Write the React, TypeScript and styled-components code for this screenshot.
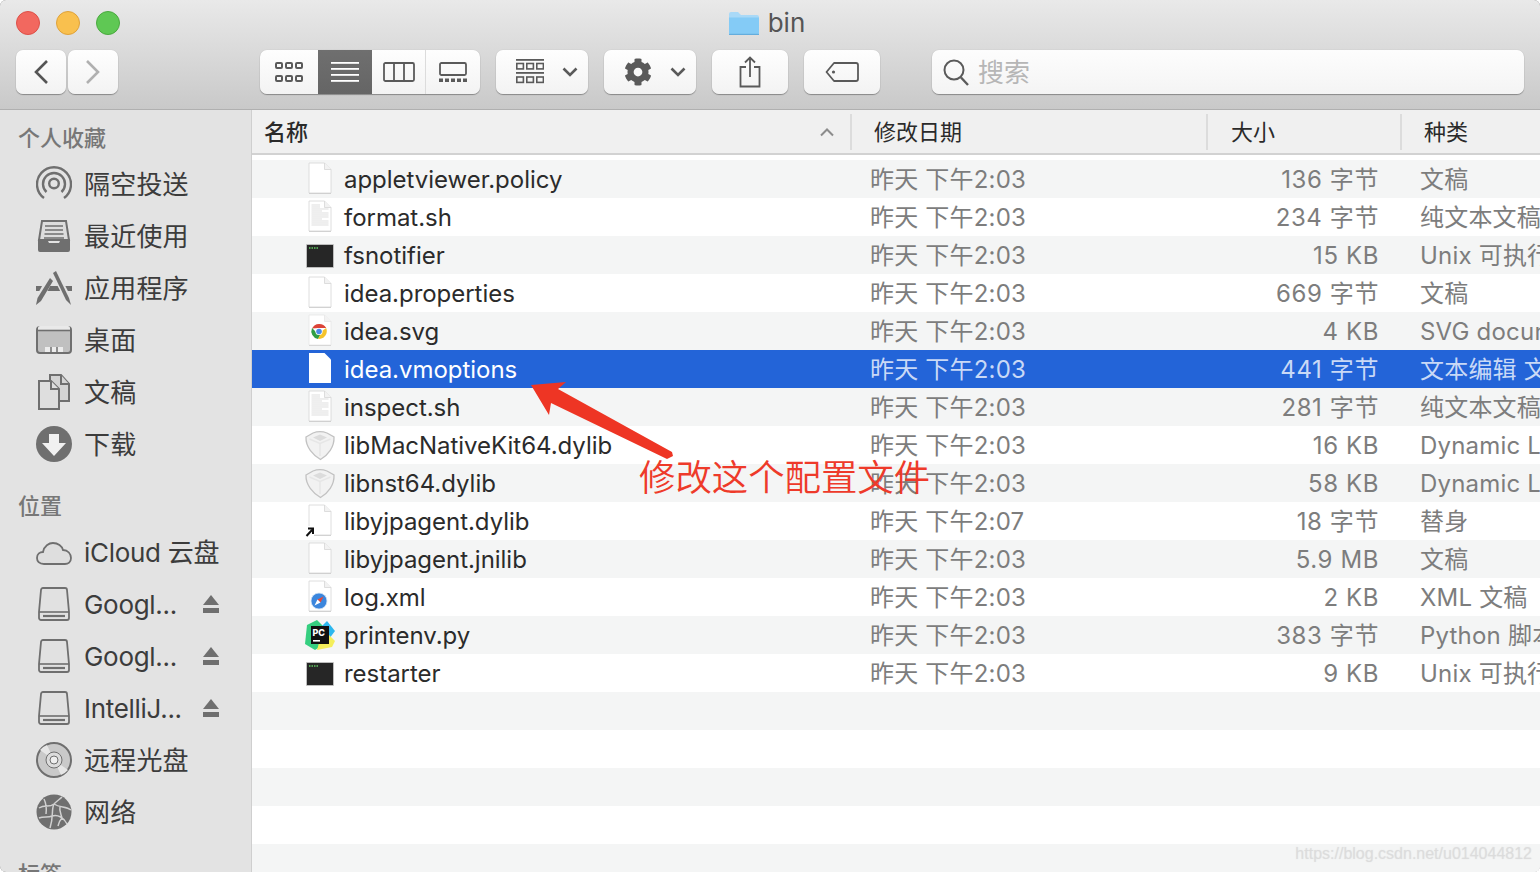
import styled, { createGlobalStyle } from "styled-components";
import { FaCog } from "react-icons/fa";

const GlobalStyle = createGlobalStyle`
  html, body {
    margin: 0;
    padding: 0;
    background: #fff;
    overflow: hidden;
  }
  * { box-sizing: border-box; }
`;

const FONT = `Inter, "Noto Sans CJK SC", sans-serif`;

const Window = styled.div`
  position: relative;
  width: 1540px;
  height: 872px;
  overflow: hidden;
  display: flex;
  flex-direction: column;
  font-family: ${FONT};
  background: #777;
  border-radius: 6px;
`;

const Toolbar = styled.header`
  height: 110px;
  flex: none;
  display: flex;
  flex-direction: column;
  background: linear-gradient(#e9e9e9, #c9c9c9);
  border-bottom: 1px solid #b0b0b0;
`;

const TitleRow = styled.div`
  height: 50px;
  flex: none;
  display: grid;
  grid-template-columns: 1fr auto 1fr;
  align-items: center;
  padding: 0 22px 5px 16px;
`;

const Lights = styled.div`
  display: flex;
  gap: 16px;
`;

const Light = styled.span<{ $color: string; $edge: string }>`
  width: 24px;
  height: 24px;
  border-radius: 50%;
  background: ${(p) => p.$color};
  border: 1px solid ${(p) => p.$edge};
`;

const Title = styled.div`
  display: flex;
  align-items: center;
  gap: 9px;
  font-size: 26px;
  line-height: 32px;
  color: #555;
`;

const ControlRow = styled.div`
  display: flex;
  align-items: center;
  height: 44px;
  padding-left: 16px;
`;

const Button = styled.div<{ $width: number; $gap?: number }>`
  width: ${(p) => p.$width}px;
  height: 44px;
  margin-left: ${(p) => p.$gap ?? 16}px;
  flex: none;
  display: flex;
  align-items: center;
  justify-content: center;
  background: linear-gradient(#fefefe, #f3f3f3);
  border-radius: 7px;
  box-shadow: 0 1px 1px rgba(0, 0, 0, 0.32), 0 0 1px rgba(0, 0, 0, 0.2);
  &:first-child { margin-left: 0; }
`;

const MenuButton = styled(Button)`
  justify-content: flex-start;
  gap: 18px;
  padding-left: 20px;
`;

const ViewGroup = styled.div`
  display: flex;
  height: 44px;
  margin-left: 142px;
  flex: none;
  border-radius: 7px;
  overflow: hidden;
  background: linear-gradient(#fefefe, #f3f3f3);
  box-shadow: 0 1px 1px rgba(0, 0, 0, 0.32), 0 0 1px rgba(0, 0, 0, 0.2);
`;

const ViewSegment = styled.div<{ $width: number; $active?: boolean; $divider?: boolean }>`
  width: ${(p) => p.$width}px;
  display: flex;
  align-items: center;
  justify-content: center;
  background: ${(p) => (p.$active ? "linear-gradient(#6f6f6f, #656565)" : "transparent")};
  border-left: ${(p) => (p.$divider ? "1px solid #dcdcdc" : "none")};
`;

const SearchBox = styled.div`
  width: 592px;
  height: 44px;
  margin-left: 52px;
  flex: none;
  display: flex;
  align-items: center;
  gap: 9px;
  padding-left: 11px;
  font-size: 26px;
  color: #b6b6b6;
  background: linear-gradient(#fdfdfd, #f4f4f4);
  border-radius: 7px;
  box-shadow: 0 1px 1px rgba(0, 0, 0, 0.32), 0 0 1px rgba(0, 0, 0, 0.2);
`;

// fixed line box, nudged down: keeps CJK fallback glyphs on the row's optical centre
const Label = styled.span<{ $line: number }>`
  display: block;
  line-height: ${(p) => p.$line - 2}px;
  padding-top: 2px;
`;

const Body = styled.div`
  flex: 1;
  min-height: 0;
  display: flex;
`;

const Sidebar = styled.nav`
  width: 252px;
  flex: none;
  overflow: hidden;
  background: #e3e3e3;
  border-right: 1px solid #cfcfcf;
  padding-top: 14px;
`;

const SectionTitle = styled.div`
  height: 28px;
  line-height: 28px;
  margin: 22px 0 6px 18px;
  font-size: 22px;
  font-weight: 500;
  color: #777;
  &:first-child { margin-top: 0; }
`;

const SideItem = styled.div<{ $latin?: boolean }>`
  height: 52px;
  display: flex;
  align-items: center;
  gap: 12px;
  padding-left: 36px;
  padding-right: 32px;
  font-size: 26px;
  letter-spacing: ${(p) => (p.$latin ? "-0.3px" : "0.2px")};
  color: #3c3c3c;
  white-space: nowrap;
`;

const Eject = styled.svg`
  margin-left: auto;
  flex: none;
`;

const Main = styled.main`
  flex: 1;
  min-width: 0;
  display: flex;
  flex-direction: column;
  background: #fff;
`;

const HeaderRow = styled.div`
  height: 45px;
  flex: none;
  display: grid;
  grid-template-columns: 599px 356px 194px 139px;
  background: #f0f0f0;
  border-bottom: 2px solid #d2d2d2;
`;

const HeaderCell = styled.div<{ $pad: number; $sorted?: boolean }>`
  position: relative;
  display: flex;
  align-items: center;
  justify-content: space-between;
  padding-left: ${(p) => p.$pad}px;
  padding-right: 16px;
  font-size: 22px;
  font-weight: ${(p) => (p.$sorted ? 500 : 400)};
  color: #2a2a2a;
  &:not(:first-child)::before {
    content: "";
    position: absolute;
    left: -1px;
    top: 4px;
    bottom: 3px;
    width: 2px;
    background: #dcdcdc;
  }
`;

const List = styled.div`
  flex: 1;
  min-height: 0;
  padding-top: 5px;
  overflow: hidden;
`;

const Row = styled.div<{ $selected?: boolean }>`
  height: 38px;
  display: grid;
  grid-template-columns: 618px 240px 269px 161px;
  align-items: center;
  font-size: 24px;
  white-space: nowrap;
  background: ${(p) => (p.$selected ? "#2364d8" : "#fff")};
  &:nth-child(odd) {
    background: ${(p) => (p.$selected ? "#2364d8" : "#f4f5f5")};
  }
`;

const NameCell = styled.div<{ $selected?: boolean }>`
  display: flex;
  align-items: center;
  gap: 7px;
  padding-left: 49px;
  letter-spacing: -0.03px;
  color: ${(p) => (p.$selected ? "#fff" : "#2b2b2b")};
`;

const DateCell = styled.div<{ $selected?: boolean }>`
  line-height: 36px;
  padding-top: 2px;
  letter-spacing: 0.2px;
  color: ${(p) => (p.$selected ? "#c9d9f6" : "#7d7d7d")};
`;

const SizeCell = styled(DateCell)`
  text-align: right;
  letter-spacing: 0.6px;
`;

const KindCell = styled(DateCell)`
  padding-left: 41px;
  overflow: hidden;
`;

const AnnotationArrow = styled.svg`
  position: absolute;
  left: 0;
  top: 0;
  pointer-events: none;
`;

const AnnotationText = styled.div`
  position: absolute;
  left: 639px;
  top: 451px;
  font-size: 36.4px;
  line-height: 54px;
  font-weight: 350;
  color: #ee3a2a;
  white-space: nowrap;
`;

const Watermark = styled.div`
  position: absolute;
  right: 8px;
  bottom: 8px;
  font-family: "Liberation Sans", sans-serif;
  font-size: 16px;
  line-height: 20px;
  color: rgba(218, 218, 218, 0.7);
  text-shadow: 0 0 1px rgba(190, 190, 190, 0.4);
`;

const GRAY = "#5a5a5a";

function Chevron({ dir, color }: { dir: "left" | "right"; color: string }) {
  return (
    <svg width="16" height="26" viewBox="0 0 16 26" fill="none">
      <path
        d={dir === "left" ? "M14 2 L3 13 L14 24" : "M2 2 L13 13 L2 24"}
        stroke={color}
        strokeWidth="2.6"
      />
    </svg>
  );
}

function Down() {
  return (
    <svg width="16" height="10" viewBox="0 0 16 10" fill="none">
      <path d="M1.5 1.5 L8 8 L14.5 1.5" stroke={GRAY} strokeWidth="2.6" />
    </svg>
  );
}

function GridIcon() {
  const cells = [0, 10, 20].flatMap((x) => [0, 13].map((y) => [x, y]));
  return (
    <svg width="28" height="20" viewBox="0 0 28 20" fill="none">
      {cells.map(([x, y]) => (
        <rect key={`${x}-${y}`} x={x + 1} y={y + 1} width="6" height="5" rx="1" stroke={GRAY} strokeWidth="2" />
      ))}
    </svg>
  );
}

function ListIcon() {
  return (
    <svg width="28" height="20" viewBox="0 0 28 20" fill="#fff">
      {[0, 6, 12, 18].map((y) => (
        <rect key={y} x="0" y={y} width="28" height="1.8" />
      ))}
    </svg>
  );
}

function ColumnsIcon() {
  return (
    <svg width="32" height="20" viewBox="0 0 32 20" fill="none" stroke={GRAY} strokeWidth="1.8">
      <rect x="1" y="1" width="30" height="18" rx="1.5" />
      <path d="M11 1 V19 M21 1 V19" />
    </svg>
  );
}

function GalleryIcon() {
  return (
    <svg width="28" height="20" viewBox="0 0 28 20" fill="none">
      <rect x="1" y="1" width="26" height="12" rx="1.5" stroke={GRAY} strokeWidth="1.8" />
      {[0, 6, 12, 18, 24].map((x) => (
        <rect key={x} x={x} y="16.5" width="4" height="3.5" fill={GRAY} />
      ))}
    </svg>
  );
}

function ArrangeIcon() {
  const row = (y: number) =>
    [0, 10, 20].map((x) => (
      <rect key={`${x}-${y}`} x={x + 0.8} y={y} width="6.6" height="5.4" fill="none" stroke={GRAY} strokeWidth="1.6" />
    ));
  return (
    <svg width="28" height="26" viewBox="0 0 28 26">
      <rect x="0" y="0" width="28" height="1.8" fill={GRAY} />
      {row(4.5)}
      <rect x="0" y="13" width="28" height="1.8" fill={GRAY} />
      {row(18)}
    </svg>
  );
}

function ShareIcon() {
  return (
    <svg width="22" height="32" viewBox="0 0 22 32" fill="none" stroke={GRAY} strokeWidth="1.8">
      <path d="M7 11 H1.5 V30.5 H20.5 V11 H15" />
      <path d="M11 21 V1.5 M6 6.5 L11 1.5 L16 6.5" />
    </svg>
  );
}

function TagIcon() {
  return (
    <svg width="34" height="20" viewBox="0 0 34 20" fill="none">
      <path
        d="M9 1 H31 a2 2 0 0 1 2 2 V17 a2 2 0 0 1 -2 2 H9 L1.5 10 Z"
        stroke={GRAY}
        strokeWidth="1.8"
        strokeLinejoin="round"
      />
      <circle cx="8.5" cy="10" r="1.6" fill={GRAY} />
    </svg>
  );
}

function SearchIcon() {
  return (
    <svg width="26" height="28" viewBox="0 0 26 28" fill="none" stroke={GRAY} strokeWidth="2">
      <circle cx="11" cy="12" r="9.5" />
      <path d="M18 19.5 L25 27" strokeWidth="2.4" />
    </svg>
  );
}

function FolderIcon() {
  return (
    <svg width="30" height="24" viewBox="0 0 30 24">
      <path d="M0 3 a2 2 0 0 1 2 -2 H9 l3 3 H28 a2 2 0 0 1 2 2 V8 H0 Z" fill="#a9d9f7" />
      <path d="M0 6.5 H30 V22 a2 2 0 0 1 -2 2 H2 a2 2 0 0 1 -2 -2 Z" fill="#84cbf6" />
      <rect x="0" y="22.8" width="30" height="1.2" fill="#64addd" />
    </svg>
  );
}

const SIDE = "#6f6f6f";

const sideIcons: Record<string, React.ReactNode> = {
  airdrop: (
    <g fill="none" stroke={SIDE} strokeWidth="2.4">
      <path d="M8 32 A17 17 0 1 1 28 32" />
      <path d="M10.5 26 A11 11 0 1 1 25.5 26" />
      <circle cx="18" cy="17.5" r="4.8" />
    </g>
  ),
  recents: (
    <g>
      <path d="M6 3 H30 L33 22 H3 Z" fill="#dcdcdc" stroke={SIDE} strokeWidth="2" />
      <path d="M9 8 H27 M9 12 H27 M8.5 16 H27.5 M8 20 H28" stroke={SIDE} strokeWidth="1.6" />
      <path d="M2 21 H11 L13 25 H23 L25 21 H34 V32 a2 2 0 0 1 -2 2 H4 a2 2 0 0 1 -2 -2 Z" fill={SIDE} />
    </g>
  ),
  apps: (
    <g>
      <path d="M0 16 H36 V21 H0 Z" fill={SIDE} />
      <path d="M18.5 2 L33 31" stroke="#e3e3e3" strokeWidth="7" />
      <path d="M16 5 L2 31" stroke="#e3e3e3" strokeWidth="7" />
      <path d="M17 3 L20 1 L33 28 L35 35 L30 30 Z" fill={SIDE} />
      <path d="M14 8 L17 11 L5 31 L0 35 L1.5 28 Z" fill={SIDE} />
    </g>
  ),
  desktop: (
    <g>
      <rect x="1" y="5" width="34" height="26" rx="3" fill="#c0c0c0" stroke={SIDE} strokeWidth="2" />
      <path d="M2 6 a2 2 0 0 1 2 -2 H32 a2 2 0 0 1 2 2 V9 H2 Z" fill="#e9e9e9" />
      <path d="M2 8.5 H34" stroke={SIDE} strokeWidth="1.6" />
      <rect x="9" y="25" width="18" height="5" fill="#ececec" />
      <path d="M15 25 V30 M21 25 V30" stroke={SIDE} strokeWidth="1.5" />
    </g>
  ),
  documents: (
    <g stroke={SIDE} strokeWidth="2" fill="#d4d4d4">
      <path d="M14 1 H25 L33 10 V27 H14 Z" />
      <path d="M25 1 V10 H33" />
      <path d="M3 7 H15 L23 15 V35 H3 Z" fill="#dedede" />
      <path d="M15 7 V15 H23" fill="#dedede" />
    </g>
  ),
  download: (
    <g>
      <circle cx="18" cy="18" r="18" fill={SIDE} />
      <path d="M13 8 H23 V17 H30 L18 30 L6 17 H13 Z" fill="#f1f1f1" />
    </g>
  ),
  cloud: (
    <path
      d="M8 30 C3 30 1 27 1 24 C1 20 4 18 7 18 C8 12 13 9 17 9 C22 9 26 12 27 16 C32 16 35 20 35 24 C35 28 32 30 29 30 Z"
      fill="#dedede"
      stroke={SIDE}
      strokeWidth="1.8"
    />
  ),
  disk: (
    <g stroke={SIDE} fill="none">
      <path d="M7 2 H29 a2 2 0 0 1 2 2 L33 26 V32 a2 2 0 0 1 -2 2 H5 a2 2 0 0 1 -2 -2 V26 L5 4 a2 2 0 0 1 2 -2 Z" fill="#e1e1e1" strokeWidth="1.8" />
      <path d="M3 26 H33" strokeWidth="1.6" />
      <path d="M7 30 H29" strokeWidth="2.2" />
    </g>
  ),
  cd: (
    <g>
      <circle cx="18" cy="18" r="17" fill="#c9c9c9" stroke={SIDE} strokeWidth="2" />
      <path d="M18 18 L4 8 A17 17 0 0 1 11 3 Z M18 18 L32 28 A17 17 0 0 1 25 33 Z" fill="#e6e6e6" />
      <circle cx="18" cy="18" r="8" fill="#dcdcdc" stroke={SIDE} strokeWidth="1" />
      <circle cx="18" cy="18" r="4" fill="#eeeeee" stroke={SIDE} strokeWidth="1" />
    </g>
  ),
  network: (
    <g>
      <circle cx="18" cy="18" r="17.5" fill={SIDE} />
      <path
        d="M3 14 C9 10 13 14 18 10 C21 7 24 5 26 3 M18 10 C15 16 18 22 14 34 M18 10 C24 14 30 12 35 16 M16 22 C22 20 28 24 31 30 M3 24 C8 22 12 24 16 22 M24 12 C23 17 25 20 26 24 M8 5 C10 9 11 12 10 20 M22 32 C23 28 24 26 26 24"
        fill="none"
        stroke="#d0d0d0"
        strokeWidth="1.5"
      />
    </g>
  ),
};

function SideIcon({ name }: { name: string }) {
  return (
    <svg width="36" height="36" viewBox="0 0 36 36" style={{ flex: "none" }}>
      {sideIcons[name]}
    </svg>
  );
}

const PAGE = "M8 2 H23.5 L30 8.5 V32 H8 Z";

function Page({ stroke = "#d6d6d6" }: { stroke?: string }) {
  return (
    <>
      <path d="M8 3 H24 L30 9 V33 H8 Z" fill="#bdbdbd" opacity="0.7" />
      <path d={PAGE} fill="#fff" stroke={stroke} strokeWidth="0.8" />
      <path d="M23.5 2 V8.5 H30" fill="#f2f2f2" stroke={stroke} strokeWidth="0.8" />
    </>
  );
}

function FileIcon({ kind, selected }: { kind: string; selected?: boolean }) {
  let art: React.ReactNode;
  if (kind === "text") {
    const lines = [6, 8, 10, 12, 14, 16, 18, 20, 22, 24, 26];
    art = (
      <>
        <Page />
        {lines.map((y, i) => (
          <path key={y} d={`M10.5 ${y} H${i < 2 ? 19 : i % 4 === 3 ? 21 : 27.5}`} stroke="#d0d0d0" strokeWidth="0.7" />
        ))}
      </>
    );
  } else if (kind === "terminal") {
    art = (
      <>
        <rect x="5" y="7" width="28" height="24" rx="1" fill="#bdbdbd" />
        <rect x="6" y="8" width="26" height="22" fill="#262626" />
        <path d="M8 11 H9.5 M10.5 11 H12 M13 11 H14.5 M15.5 11 H17" stroke="#62c862" strokeWidth="1.6" />
      </>
    );
  } else if (kind === "chrome") {
    art = (
      <>
        <Page stroke="#e6e6e6" />
        <path d="M11 15.5 A8 8 0 0 1 25.2 15 H18 Z" fill="#dc4438" />
        <path d="M11 15 A8 8 0 0 0 17 26 L21 19 H15 Z" fill="#2f9e44" />
        <path d="M25.2 15 A8 8 0 0 1 17 26 L21 18 Z" fill="#f5c32c" />
        <circle cx="18" cy="18.5" r="3.6" fill="#fff" />
        <circle cx="18" cy="18.5" r="2.8" fill="#4a8ae8" />
      </>
    );
  } else if (kind === "dylib") {
    art = (
      <>
        <path d="M5 10 L12 6 C16 4.5 22 4.5 26 6 L33 10 C33.5 20 27 28 19.5 32.5 C12 28 4.5 20 5 10 Z" fill="#f2f2f2" stroke="#c2c2c2" strokeWidth="1.3" />
        <path d="M12 10.5 L19 7.5 L26 10.5 L19 14 Z" fill="#dcdcdc" />
        <path d="M8.5 12 L19 16.5 L29.5 12 M19 16.5 V29" fill="none" stroke="#e6e6e6" strokeWidth="1.4" />
      </>
    );
  } else if (kind === "alias") {
    art = (
      <>
        <Page />
        <rect x="4" y="23" width="9" height="11" fill="#fff" />
        <path d="M5.5 33 L11 27 M7 25.5 H12 V31" stroke="#111" strokeWidth="2" fill="none" />
      </>
    );
  } else if (kind === "safari") {
    art = (
      <>
        <Page />
        <circle cx="18" cy="22" r="8" fill="#3b86dd" stroke="#d4e4f6" strokeWidth="0.8" />
        <path d="M22.5 17.5 L19.5 23.5 L16.5 20.5 Z" fill="#e8493a" />
        <path d="M13.5 26.5 L16.5 20.5 L19.5 23.5 Z" fill="#fff" />
      </>
    );
  } else if (kind === "pycharm") {
    art = (
      <>
        <path d="M6 8 L16 3 L22 9 V28 L14 33 L4 27 Z" fill="#35cf80" />
        <path d="M26 4 L34 14 L28 22 L20 10 Z" fill="#2cb7ee" />
        <path d="M16 33 L22 12 L34 24 L31 30 Z" fill="#f4ee5a" />
        <rect x="10" y="9" width="18" height="18" fill="#111" />
        <text x="11.5" y="18.5" fontFamily="Inter, sans-serif" fontSize="9" fontWeight="800" fill="#fff">
          PC
        </text>
        <rect x="12" y="23" width="7" height="1.6" fill="#fff" />
      </>
    );
  } else if (selected) {
    art = <path d={PAGE} fill="#fff" />;
  } else {
    art = <Page />;
  }
  return (
    <svg width="36" height="36" viewBox="0 0 36 36" style={{ flex: "none" }}>
      {art}
    </svg>
  );
}

const files = [
  { name: "appletviewer.policy", icon: "doc", date: "昨天 下午2:03", size: "136 字节", kind: "文稿" },
  { name: "format.sh", icon: "text", date: "昨天 下午2:03", size: "234 字节", kind: "纯文本文稿" },
  { name: "fsnotifier", icon: "terminal", date: "昨天 下午2:03", size: "15 KB", kind: "Unix 可执行文件" },
  { name: "idea.properties", icon: "doc", date: "昨天 下午2:03", size: "669 字节", kind: "文稿" },
  { name: "idea.svg", icon: "chrome", date: "昨天 下午2:03", size: "4 KB", kind: "SVG document" },
  { name: "idea.vmoptions", icon: "doc", date: "昨天 下午2:03", size: "441 字节", kind: "文本编辑 文稿", selected: true },
  { name: "inspect.sh", icon: "text", date: "昨天 下午2:03", size: "281 字节", kind: "纯文本文稿" },
  { name: "libMacNativeKit64.dylib", icon: "dylib", date: "昨天 下午2:03", size: "16 KB", kind: "Dynamic Library" },
  { name: "libnst64.dylib", icon: "dylib", date: "昨天 下午2:03", size: "58 KB", kind: "Dynamic Library" },
  { name: "libyjpagent.dylib", icon: "alias", date: "昨天 下午2:07", size: "18 字节", kind: "替身" },
  { name: "libyjpagent.jnilib", icon: "doc", date: "昨天 下午2:03", size: "5.9 MB", kind: "文稿" },
  { name: "log.xml", icon: "safari", date: "昨天 下午2:03", size: "2 KB", kind: "XML 文稿" },
  { name: "printenv.py", icon: "pycharm", date: "昨天 下午2:03", size: "383 字节", kind: "Python 脚本" },
  { name: "restarter", icon: "terminal", date: "昨天 下午2:03", size: "9 KB", kind: "Unix 可执行文件" },
];

const favourites = [
  { icon: "airdrop", label: "隔空投送" },
  { icon: "recents", label: "最近使用" },
  { icon: "apps", label: "应用程序" },
  { icon: "desktop", label: "桌面" },
  { icon: "documents", label: "文稿" },
  { icon: "download", label: "下载" },
];

const locations = [
  { icon: "cloud", label: "iCloud 云盘", latin: true },
  { icon: "disk", label: "Googl...", latin: true, eject: true },
  { icon: "disk", label: "Googl...", latin: true, eject: true },
  { icon: "disk", label: "IntelliJ...", latin: true, eject: true },
  { icon: "cd", label: "远程光盘" },
  { icon: "network", label: "网络" },
];

export default function App() {
  return (
    <Window>
      <GlobalStyle />
      <Toolbar>
        <TitleRow>
          <Lights>
            <Light $color="#f2685f" $edge="#dd5048" />
            <Light $color="#f9c04e" $edge="#dfa23a" />
            <Light $color="#5fc854" $edge="#4aa93f" />
          </Lights>
          <Title>
            <FolderIcon />
            bin
          </Title>
        </TitleRow>
        <ControlRow>
          <Button $width={50}>
            <Chevron dir="left" color="#555" />
          </Button>
          <Button $width={50} $gap={2}>
            <Chevron dir="right" color="#b0b0b0" />
          </Button>
          <ViewGroup>
            <ViewSegment $width={58}>
              <GridIcon />
            </ViewSegment>
            <ViewSegment $width={54} $active>
              <ListIcon />
            </ViewSegment>
            <ViewSegment $width={53}>
              <ColumnsIcon />
            </ViewSegment>
            <ViewSegment $width={55} $divider>
              <GalleryIcon />
            </ViewSegment>
          </ViewGroup>
          <MenuButton $width={92}>
            <ArrangeIcon />
            <Down />
          </MenuButton>
          <MenuButton $width={92}>
            <FaCog size={28} color={GRAY} />
            <Down />
          </MenuButton>
          <Button $width={76}>
            <ShareIcon />
          </Button>
          <Button $width={76}>
            <TagIcon />
          </Button>
          <SearchBox>
            <SearchIcon />
            <Label $line={44}>搜索</Label>
          </SearchBox>
        </ControlRow>
      </Toolbar>
      <Body>
        <Sidebar>
          <SectionTitle>个人收藏</SectionTitle>
          {favourites.map((item) => (
            <SideItem key={item.label}>
              <SideIcon name={item.icon} />
              <Label $line={52}>{item.label}</Label>
            </SideItem>
          ))}
          <SectionTitle>位置</SectionTitle>
          {locations.map((item, i) => (
            <SideItem key={i} $latin={item.latin}>
              <SideIcon name={item.icon} />
              <Label $line={52}>{item.label}</Label>
              {item.eject && (
                <Eject width="16" height="18" viewBox="0 0 16 18" fill={SIDE}>
                  <path d="M8 0 L16 10 H0 Z" />
                  <rect x="0" y="13" width="16" height="5" />
                </Eject>
              )}
            </SideItem>
          ))}
          <SectionTitle>标签</SectionTitle>
        </Sidebar>
        <Main>
          <HeaderRow>
            <HeaderCell $pad={12} $sorted>
              <Label $line={43}>名称</Label>
              <svg width="16" height="10" viewBox="0 0 16 10" fill="none">
                <path d="M2 8.5 L8 2.5 L14 8.5" stroke="#8c8c8c" strokeWidth="2" />
              </svg>
            </HeaderCell>
            <HeaderCell $pad={23}>
              <Label $line={43}>修改日期</Label>
            </HeaderCell>
            <HeaderCell $pad={24}>
              <Label $line={43}>大小</Label>
            </HeaderCell>
            <HeaderCell $pad={23}>
              <Label $line={43}>种类</Label>
            </HeaderCell>
          </HeaderRow>
          <List>
            {files.map((f) => (
              <Row key={f.name} $selected={f.selected}>
                <NameCell $selected={f.selected}>
                  <FileIcon kind={f.icon} selected={f.selected} />
                  <Label $line={38}>{f.name}</Label>
                </NameCell>
                <DateCell $selected={f.selected}>{f.date}</DateCell>
                <SizeCell $selected={f.selected}>{f.size}</SizeCell>
                <KindCell $selected={f.selected}>{f.kind}</KindCell>
              </Row>
            ))}
            {[0, 1, 2, 3, 4].map((i) => (
              <Row key={i} />
            ))}
          </List>
        </Main>
      </Body>
      <AnnotationArrow width="1540" height="872" viewBox="0 0 1540 872">
        <path
          d="M531 385 L566 382 L558 389 L672 452 L673 456 L667 459 L551 403 L549 415 Z"
          fill="#ee3524"
        />
      </AnnotationArrow>
      <AnnotationText>修改这个配置文件</AnnotationText>
      <Watermark>https://blog.csdn.net/u014044812</Watermark>
    </Window>
  );
}
